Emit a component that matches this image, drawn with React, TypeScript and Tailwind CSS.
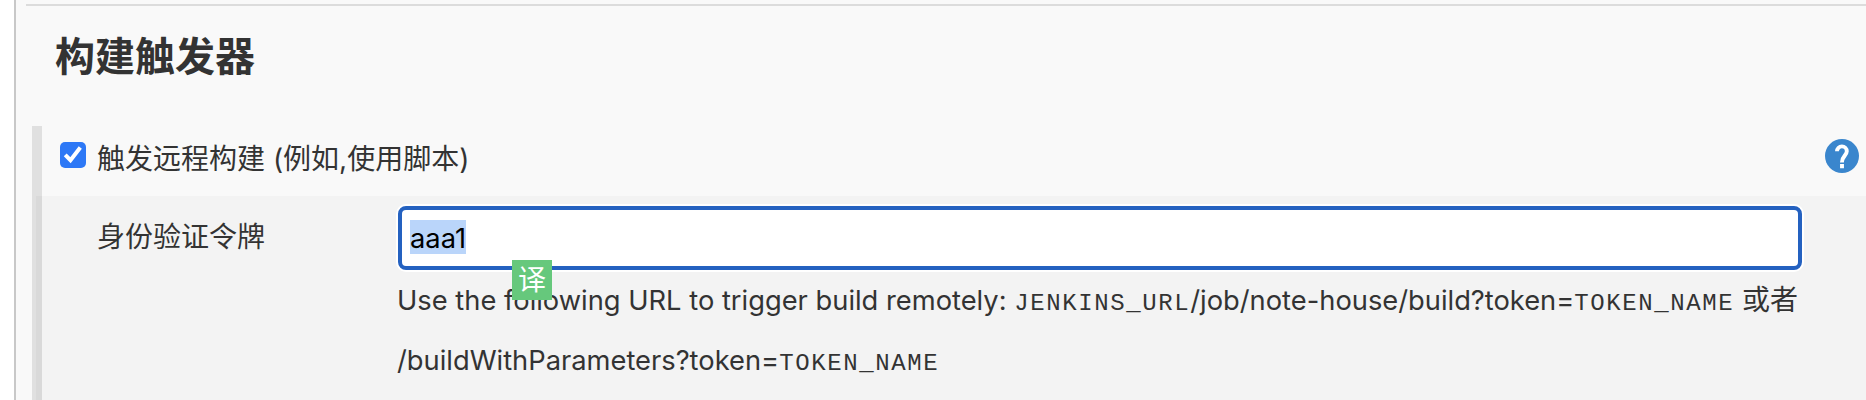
function Code({ children }: { children: string }) {
  return (
    <code className="font-['Liberation_Mono',monospace] text-[24px] leading-none tracking-[1.6px]">{children}</code>
  );
}

export default function App() {
  return (
    <div className="flex h-[400px] w-full overflow-hidden bg-white pl-3.5 font-['Inter','Noto_Sans_CJK_SC',sans-serif] text-[28px] text-[#333]">
      <main className="flex min-w-0 flex-1 flex-col border-l-2 border-[#c8c8c8] bg-[#f9f9f9] pt-1">
        <div className="ml-2.5 h-0.5 shrink-0 bg-[#dcdcdc]" />
        <h2 className="mt-[21px] ml-[39px] h-[60px] shrink-0 text-[40px] leading-[60px] font-bold">构建触发器</h2>
        <section className="mt-[39px] ml-4 flex flex-1 flex-col border-l-[10px] border-[#e0e0e0]">
          <div className="flex h-[70px] shrink-0 items-start pr-[7px] pl-[18px]">
            <span className="mt-4 flex size-[26px] items-center justify-center rounded-[5px] bg-[#2d78f6]">
              <svg viewBox="0 0 26 26" className="size-[26px]" fill="none" stroke="white" strokeWidth="4">
                <path d="M5.2 12.8 10.5 18.2 20.3 5.6" />
              </svg>
            </span>
            <span className="mt-[13px] ml-[11px] leading-10">触发远程构建 (例如,使用脚本)</span>
            <span className="mt-[13px] ml-auto flex size-[34px] rounded-full bg-[#3a86cd]">
              <svg viewBox="0 0 34 34" className="size-[34px]" fill="none" stroke="white" strokeWidth="3.9">
                <path d="M12 12.3a4.9 4.9 0 0 1 9.8 0c0 4.2-4.9 4.8-4.9 11.2M17 25v4.2" />
              </svg>
            </span>
          </div>
          <div className="-ml-1.5 flex flex-1 bg-[#f3f3f3]">
            <div className="w-1.5 shrink-0 bg-[#d9d9d9]" />
            <div className="mt-[21px] ml-[55px] w-[301px] shrink-0 leading-10">身份验证令牌</div>
            <div className="w-[1404px] pt-2.5">
              <div className="relative flex h-16 items-start rounded-lg border-4 border-[#2461c0] bg-white px-2 pt-2.5 text-black shadow-[0_0_0_2px_white]">
                <span className="h-[34px] w-14 bg-[#bad5fa] text-[27.3px] leading-[37px]">aaa1</span>
                <span className="absolute top-[50px] left-[110px] flex size-10 items-center justify-center bg-[#66c87c] text-white">译</span>
              </div>
              <p className="mt-px -ml-px text-[27.3px] leading-[60px] whitespace-nowrap">
                Use the following URL to trigger build remotely: <Code>JENKINS_URL</Code>/job/note-house/build?token=<Code>TOKEN_NAME</Code> <span className="text-[28px] leading-none">或者</span>
                <br />
                /buildWithParameters?token=<Code>TOKEN_NAME</Code>
              </p>
            </div>
          </div>
        </section>
      </main>
    </div>
  );
}
